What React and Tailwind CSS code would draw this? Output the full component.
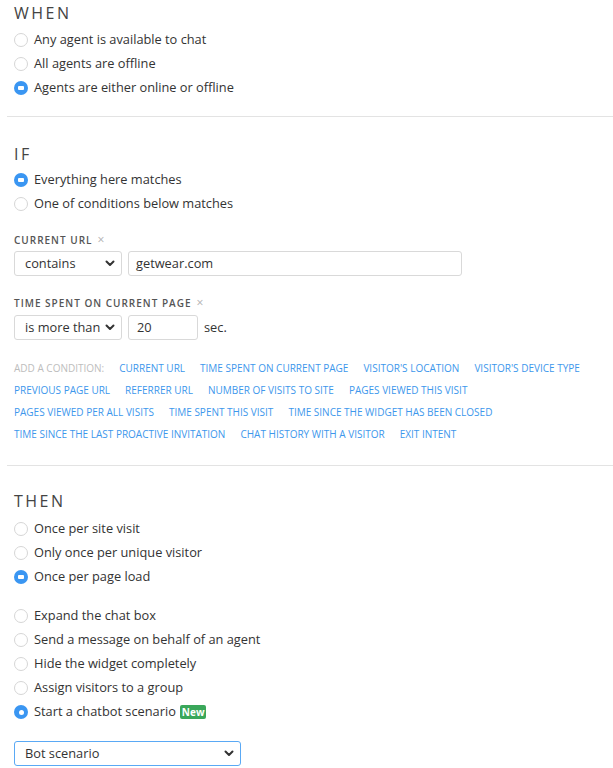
import React from "react";

const font = { fontFamily: '"Open Sans", "Liberation Sans", sans-serif' };

function Radio({ checked, dot = "square", label, children }) {
  return (
    <div className="flex items-center h-6">
      {checked ? (
        <span className="w-[14px] h-[14px] rounded-full bg-[#3a96f2] flex items-center justify-center shrink-0">
          {dot === "square" ? (
            <span className="w-[6px] h-[4px] rounded-[1px] bg-white" />
          ) : (
            <span className="w-[5px] h-[5px] rounded-full bg-white" />
          )}
        </span>
      ) : (
        <span className="w-[14px] h-[14px] rounded-full border border-[#d6d6d6] bg-white shrink-0" />
      )}
      <span className="ml-[6px] text-[12.8px] text-[#333]">{label}</span>
      {children}
    </div>
  );
}

function Chevron() {
  return (
    <svg width="10" height="7" viewBox="0 0 10 7" className="shrink-0">
      <path d="M1.5 1.5 L5 5 L8.5 1.5" fill="none" stroke="#333" strokeWidth="2" strokeLinecap="round" strokeLinejoin="round" />
    </svg>
  );
}

function Select({ text, className = "", blue = false }) {
  return (
    <div
      className={`h-[25px] flex items-center justify-between rounded-[3px] border ${blue ? "border-[#5aa9f5]" : "border-[#d9d9d9]"} bg-white pl-[10px] pr-[6px] text-[12.8px] text-[#333] ${className}`}
    >
      <span>{text}</span>
      <Chevron />
    </div>
  );
}

function Heading({ children, className = "" }) {
  return (
    <div className={`text-[16px] leading-[22px] tracking-[2.5px] text-[#444] ${className}`}>{children}</div>
  );
}

function CondLabel({ children }) {
  return (
    <div className="flex items-center h-[14px] text-[10px] font-semibold tracking-[1px] text-[#555]">
      <span>{children}</span>
      <span className="ml-[5px] text-[12px] font-normal text-[#b0b0b0] leading-none">×</span>
    </div>
  );
}

const rows = [
  ["CURRENT URL", "TIME SPENT ON CURRENT PAGE", "VISITOR'S LOCATION", "VISITOR'S DEVICE TYPE"],
  ["PREVIOUS PAGE URL", "REFERRER URL", "NUMBER OF VISITS TO SITE", "PAGES VIEWED THIS VISIT"],
  ["PAGES VIEWED PER ALL VISITS", "TIME SPENT THIS VISIT", "TIME SINCE THE WIDGET HAS BEEN CLOSED"],
  ["TIME SINCE THE LAST PROACTIVE INVITATION", "CHAT HISTORY WITH A VISITOR", "EXIT INTENT"],
];

export default function App() {
  return (
    <div style={font} className="w-[613px] h-[768px] overflow-hidden bg-white pl-[7px]">
      {/* WHEN */}
      <section className="pl-[7px] pt-[2px] pb-[16px]">
        <Heading>WHEN</Heading>
        <div className="mt-[4px]">
          <Radio label="Any agent is available to chat" />
          <Radio label="All agents are offline" />
          <Radio checked label="Agents are either online or offline" />
        </div>
      </section>

      {/* IF */}
      <section className="border-t border-[#e3e3e3] pl-[7px] pt-[26px] pb-[20px]">
        <Heading>IF</Heading>
        <div className="mt-[3px]">
          <Radio checked label="Everything here matches" />
          <Radio label="One of conditions below matches" />
        </div>

        <div className="mt-[17px]">
          <CondLabel>CURRENT URL</CondLabel>
          <div className="flex items-center gap-[6px] mt-[4px]">
            <Select text="contains" className="w-[108px]" />
            <div className="w-[334px] h-[25px] rounded-[3px] border border-[#d9d9d9] flex items-center pl-[7px] text-[12.8px] text-[#333]">
              getwear.com
            </div>
          </div>
        </div>

        <div className="mt-[20px]">
          <CondLabel>TIME SPENT ON CURRENT PAGE</CondLabel>
          <div className="flex items-center gap-[6px] mt-[5px]">
            <Select text="is more than" className="w-[108px]" />
            <div className="w-[70px] h-[25px] rounded-[3px] border border-[#d9d9d9] flex items-center pl-[8px] text-[12.8px] text-[#333]">
              20
            </div>
            <span className="text-[12.8px] text-[#333]">sec.</span>
          </div>
        </div>

        <div className="mt-[17px] text-[10px] uppercase">
          {rows.map((r, i) => (
            <div key={i} className="flex items-center h-[22px] gap-[15px]">
              {i === 0 && <span className="text-[#bdbdbd]">ADD A CONDITION:</span>}
              {r.map((t) => (
                <span key={t} className="text-[#3d97ec]">{t}</span>
              ))}
            </div>
          ))}
        </div>
      </section>

      {/* THEN */}
      <section className="border-t border-[#e3e3e3] pl-[7px] pt-[24px]">
        <Heading>THEN</Heading>
        <div className="mt-[5px]">
          <Radio label="Once per site visit" />
          <Radio label="Only once per unique visitor" />
          <Radio checked label="Once per page load" />
        </div>
        <div className="mt-[15px]">
          <Radio label="Expand the chat box" />
          <Radio label="Send a message on behalf of an agent" />
          <Radio label="Hide the widget completely" />
          <Radio label="Assign visitors to a group" />
          <Radio checked dot="circle" label="Start a chatbot scenario">
            <span className="ml-[4px] h-[14px] px-[2px] rounded-[2px] bg-[#3aa75a] text-white text-[10px] font-bold leading-[14px]">
              New
            </span>
          </Radio>
        </div>
        <Select blue text="Bot scenario" className="w-[227px] mt-[17px]" />
      </section>
    </div>
  );
}
